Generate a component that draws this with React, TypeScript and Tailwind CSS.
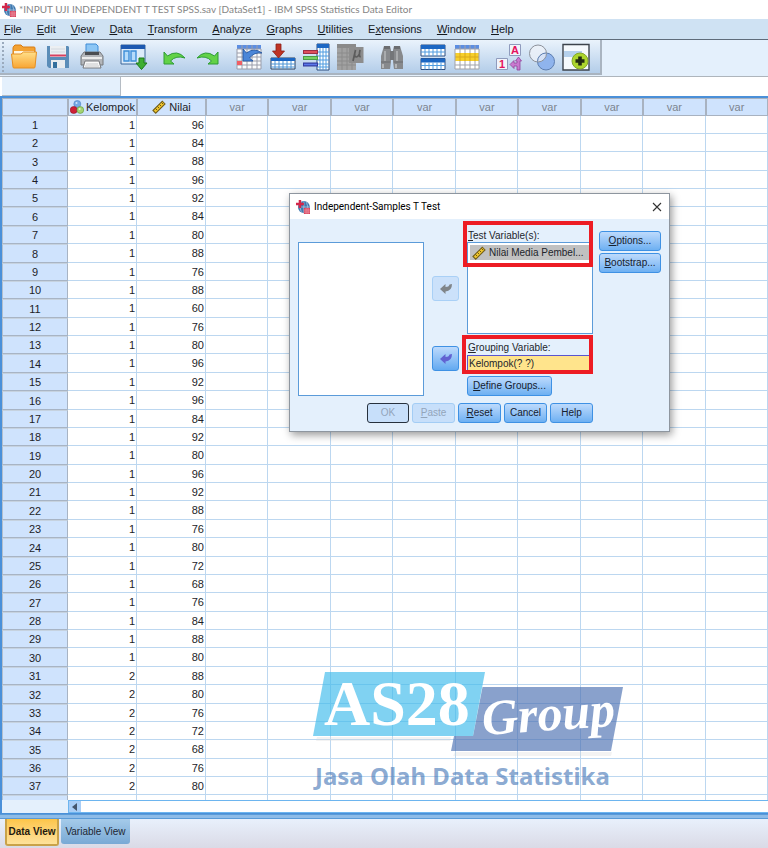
import type { ReactNode } from "react";

const values = [
  96, 84, 88, 96, 92, 84, 80, 88, 76, 88, 60, 76, 80, 96, 92, 96, 84, 92, 80, 96,
  92, 88, 76, 80, 72, 68, 76, 84, 88, 80, 88, 80, 76, 72, 68, 76, 80,
];

const emptyColumns = [0, 1, 2, 3, 4, 5, 6, 7, 8];

const menus = [
  ["", "F", "ile"],
  ["", "E", "dit"],
  ["", "V", "iew"],
  ["", "D", "ata"],
  ["", "T", "ransform"],
  ["", "A", "nalyze"],
  ["", "G", "raphs"],
  ["", "U", "tilities"],
  ["E", "x", "tensions"],
  ["", "W", "indow"],
  ["", "H", "elp"],
];

function Key({ children }: { children: ReactNode }) {
  return <span className="underline underline-offset-1">{children}</span>;
}

function AppIcon() {
  return (
    <svg viewBox="0 0 16 16" className="size-[14px] shrink-0" aria-hidden="true">
      <circle cx="9" cy="8" r="6.800" fill="#3f79b0" />
      <path d="M3 8h12M9 1.500v13M6 2.500q-3 5.500 0 11M12 2.500q3 5.500 0 11" stroke="#b9d3ea" strokeWidth=".8" fill="none" />
      <path d="M4.500 0v9M0 4.500h9" stroke="#d3274a" strokeWidth="2.800" />
      <rect x="9" y="9" width="7" height="7" fill="#d8405c" />
      <path d="M9 11.500h7M9 13.800h7M11.500 9v7M13.800 9v7" stroke="#f4c9d1" strokeWidth=".5" />
    </svg>
  );
}

function RulerIcon() {
  return (
    <svg viewBox="0 0 14 14" className="size-[14px] shrink-0" aria-hidden="true">
      <path d="M1 10.500 10.300 1.200 13 3.900 3.700 13.200Z" fill="#f0c62c" stroke="#74601c" strokeWidth="1.100" />
      <path d="m3.500 8.500 1.400 1.400M5.500 6.500l1.400 1.400M7.500 4.500l1.400 1.400M9.500 2.500l1.400 1.400" stroke="#5d4a10" strokeWidth="1" />
    </svg>
  );
}

function NominalIcon() {
  return (
    <svg viewBox="0 0 14 14" className="size-[14px] shrink-0" aria-hidden="true">
      <circle cx="7.300" cy="4" r="3.500" fill="#76a9e6" stroke="#4c7fc0" strokeWidth=".6" />
      <circle cx="3.700" cy="10" r="3.500" fill="#cf2037" stroke="#8e1324" strokeWidth=".6" />
      <circle cx="10.300" cy="10" r="3.400" fill="#a4d473" stroke="#5e9437" strokeWidth=".6" />
      <circle cx="6.500" cy="3" r="1" fill="#d3e6fb" />
      <circle cx="9.600" cy="9" r="1" fill="#e3f5cf" />
    </svg>
  );
}

const icons: Record<string, ReactNode> = {
  open: (
    <>
      <path d="M3 16V5q0-1 1-2l1-1h6l2 2h11q1 0 1 1v11Z" fill="#f3a233" stroke="#d97d12" />
      <path d="M4 8h20v5H4Z" fill="#fff6df" />
      <path d="M1.500 11H11l2.500-2h13L25 24q0 1-1 1H4q-1 0-1-1Z" fill="url(#folder)" stroke="#e58f22" />
    </>
  ),
  save: (
    <>
      <path d="M3 3h21l1 1v21H5l-2-2Z" fill="#5b8db8" />
      <path d="M6 3h16v11H6Z" fill="#eceff2" />
      <path d="M6 12.500h16" stroke="#d8405f" strokeWidth="2" />
      <path d="M7 6h14M7 9h14" stroke="#d2d8df" />
      <path d="M7 17h14v8H7Z" fill="#e8ecef" />
      <path d="M9 19h4v6H9Z" fill="#336f9d" />
    </>
  ),
  print: (
    <>
      <path d="M8 1h10l2 2v9H8Z" fill="#8cc6f5" stroke="#3f8bd6" />
      <path d="M6 9h16l3 4v9H3v-9Z" fill="#b3b6ba" stroke="#75787c" />
      <path d="M7 9h14v3H7Z" fill="#4a4d51" />
      <path d="M4 15h20" stroke="#eceded" strokeWidth="2" />
      <path d="M7 18h14l2 7H5Z" fill="#f9f9f9" stroke="#77797d" />
      <path d="M8 21h12M7 23h14" stroke="#c5c7c9" />
    </>
  ),
  recall: (
    <>
      <path d="M2 2h24v19H2Z" fill="#dcebfa" stroke="#3c6698" />
      <path d="M2 2h24v4H2Z" fill="#1d59b0" />
      <path d="M5 8h5v10H5ZM12 8h5v10h-5Z" fill="#b5dbfa" stroke="#3d8ed8" strokeWidth="1.400" />
      <path d="M20 15h5v5h3l-5.500 6.500L17 20h3Z" fill="#3fae32" stroke="#1c7a1b" />
    </>
  ),
  undo: <path d="M4 9v12h10l-3.500-3q5.500-6 14.500-3Q17 6 7.500 13Z" fill="#62d247" stroke="#2e9c35" />,
  redo: <path d="M24 9v12H14l3.500-3Q12 12 3 15q8-9 17.500-2Z" fill="#62d247" stroke="#2e9c35" />,
  gotoCase: (
    <>
      <path d="M2 2h24v24H2Z" fill="#fafbfd" />
      <path d="M2 2h24v4H2Z" fill="#5c8ee2" />
      <path d="M2 6h24M2 10h24M2 14h24M2 18h24M2 22h24M2 26h24M2 6v20M7 2v24M12 2v24M17 2v24M22 2v24M26 6v20" stroke="#9a9daa" />
      <path d="M2 18h5v4H2Z" fill="#f05d64" />
      <path d="M8 6v12h10l-3.500-3Q19 9 27 10q-8-6-15.500 0Z" fill="#4b86d8" stroke="#1c4f9c" strokeWidth=".8" />
    </>
  ),
  gotoVariable: (
    <>
      <path d="M2 15h24v11H2Z" fill="#fff" stroke="#273e5e" />
      <path d="M2 15h24v3H2Z" fill="#1c67c3" />
      <path d="M2 21h24M2 24h24M6 18v8M10 18v8M14 18v8M18 18v8M22 18v8" stroke="#4c93d4" />
      <path d="M7 1h5v7h3.500l-6 7-6-7H7Z" fill="#bf3324" stroke="#8c2017" strokeWidth=".8" />
    </>
  ),
  variables: (
    <>
      <path d="M14 1h12v26H14Z" fill="#fff" stroke="#2a4b7c" />
      <path d="M14 1h12v4H14Z" fill="#1c67c3" />
      <path d="M14 9h12M14 13h12M14 17h12M14 21h12M14 24h12M17 5v22M20 5v22M23 5v22" stroke="#4f9be0" />
      <path d="M0 9h15" stroke="#9d2f45" strokeWidth="4" />
      <path d="M1 9h13" stroke="#ef5a63" strokeWidth="1.600" />
      <path d="M0 15h15" stroke="#4a9e45" strokeWidth="4" />
      <path d="M1 15h13" stroke="#84df6d" strokeWidth="1.600" />
      <path d="M0 21.500h15" stroke="#343c9e" strokeWidth="4" />
      <path d="M1 21.500h13" stroke="#5c78ec" strokeWidth="1.600" />
    </>
  ),
  descriptives: (
    <>
      <path d="M0 1h19v26H0Z" fill="#a1a1a1" />
      <path d="M0 1h19v4H0Z" fill="#8a8a8a" />
      <path d="M0 10h19M0 14h19M0 18h19M0 22h19M5 5v22M10 5v22M15 5v22" stroke="#8b8b8b" />
      <path d="M12 4h14.500v16H12Z" fill="#8d8d8d" />
      <path d="M16 18 18.500 7q-2 7 .8 7t3.700-7q-1.500 7 .8 6.500" stroke="#5c5c5c" strokeWidth="1.700" fill="none" />
    </>
  ),
  find: (
    <>
      <path d="M6 3h6l1 4v12l-1 7H3V13Z" fill="#87898c" />
      <path d="M16 3h6l3 10v13h-9l-1-7V7Z" fill="#87898c" />
      <path d="M12 8h4v9h-4Z" fill="#747679" />
      <path d="M6 3h6v3H6ZM16 3h6v3h-6Z" fill="#6b6d70" />
      <path d="M7 8v10M19 8v10" stroke="#a9abad" strokeWidth="2" />
      <path d="M3 19h9M16 19h9" stroke="#6b6d70" />
      <path d="M5 21v4M18 21v4" stroke="#b4b6b8" strokeWidth="2" />
    </>
  ),
  split: (
    <>
      <path d="M2 2h24v11H2ZM2 15.500h24v11H2Z" fill="#fff" stroke="#2c4e80" />
      <path d="M2 2h24v4H2ZM2 15.500h24v4H2Z" fill="#1c67c3" />
      <path d="M2 9h24M2 22.500h24M6 6v7M10 6v7M14 6v7M18 6v7M22 6v7M6 19.500v7M10 19.500v7M14 19.500v7M18 19.500v7M22 19.500v7" stroke="#4f9be0" />
    </>
  ),
  select: (
    <>
      <path d="M2 2h24v24H2Z" fill="#fff" />
      <path d="M2 2h24v4H2Z" fill="#5c8ee2" />
      <path d="M2 10h24v8H2Z" fill="#f7cf2b" />
      <path d="M7 10v8M12 10v8M17 10v8M22 10v8M2 14h24" stroke="#d9a91c" />
      <path d="M2 6h24M2 22h24M2 26h24M2 6v20M26 6v20M7 2v8M12 2v8M17 2v8M22 2v8M7 18v8M12 18v8M17 18v8M22 18v8" stroke="#a1a3ab" />
    </>
  ),
  labels: (
    <>
      <path d="M15.500 1.500h11v11h-11ZM2.500 15.500h11v11h-11Z" fill="#f2f4fb" stroke="#8f9bbd" />
      <text x="21" y="11" textAnchor="middle" fontSize="11" fontWeight="700" fontFamily="Liberation Sans, sans-serif" fill="#e5125d">A</text>
      <text x="8" y="25" textAnchor="middle" fontSize="11" fontWeight="700" fontFamily="Liberation Sans, sans-serif" fill="#e5125d">1</text>
      <path d="m24.500 14 3 4h-1.500v9h-3v-4h-3v2.500l-4-4 4-4v2.500h3v-2h-1.500Z" fill="#c978cf" stroke="#93429b" strokeWidth=".8" />
    </>
  ),
  sets: (
    <>
      <circle cx="18" cy="18.500" r="8.500" fill="#8fb4ed" stroke="#5d7eb0" />
      <circle cx="10" cy="10.500" r="8.500" fill="#eef2f8" fillOpacity=".75" stroke="#8d929b" />
      <path d="M18 10A8.500 8.500 0 0 0 9.500 18.500" stroke="#5d7eb0" fill="none" />
    </>
  ),
  custom: (
    <>
      <path d="M1 1.500h26v25.500H1Z" fill="#f5f9fd" stroke="#3c434c" strokeWidth="1.400" />
      <path d="M2 8h18v6H2Z" fill="#b5d0ec" />
      <circle cx="18" cy="18" r="8" fill="#acd52d" stroke="#84a72a" />
      <path d="M18 13.500v9M13.500 18h9" stroke="#222b12" strokeWidth="3.600" />
    </>
  ),
};

const toolGroups = [
  [["open", "Open data"], ["save", "Save"], ["print", "Print"]],
  [["recall", "Recall dialogs"]],
  [["undo", "Undo"], ["redo", "Redo"]],
  [["gotoCase", "Go to case"], ["gotoVariable", "Go to variable"], ["variables", "Variables"], ["descriptives", "Descriptives"]],
  [["find", "Find"]],
  [["split", "Split file"], ["select", "Select cases"]],
  [["labels", "Value labels"], ["sets", "Variable sets"], ["custom", "Customize toolbar"]],
];

function Toolbar() {
  return (
    <div className="flex h-[37px] items-start border-b border-[#aeb5bc] bg-[#e4f0fc]">
      <div className="flex h-[35px] items-center gap-[13px] border-r-2 border-b-2 border-[#a9b4c0] bg-linear-to-b from-[#eaf3fc] to-[#b3cde9] pr-[10px] pl-[2px]">
        <span className="-mr-[7px] h-[30px] border-l-2 border-dotted border-[#9aaabd]" />
        {toolGroups.map((group) => (
          <div key={group[0][0]} className="flex gap-[6px]">
            {group.map(([id, label]) => (
              <button key={id} type="button" aria-label={label} className="size-[28px]">
                <svg viewBox="0 0 28 28" className="size-[28px] overflow-visible" fill="none" aria-hidden="true">
                  <defs>
                    <linearGradient id="folder" x1="0" y1="0" x2="0" y2="1">
                      <stop offset="0" stopColor="#ffe08a" />
                      <stop offset="1" stopColor="#f8a533" />
                    </linearGradient>
                  </defs>
                  {icons[id]}
                </svg>
              </button>
            ))}
          </div>
        ))}
      </div>
    </div>
  );
}

function DataGrid() {
  const head = "h-[18px] border border-[#a8b2c0] bg-[#cfe3fd] p-0 font-normal";
  const cell = "border-r border-b border-[#bcd7f0] p-0 pr-px text-right";
  return (
    <div className="h-[704px] overflow-hidden border-t-2 border-l-2 border-[#4a90d9] bg-white">
      <table className="w-full table-fixed border-separate border-spacing-0 text-[11px] leading-[16px] text-[#1d1d28]">
        <colgroup>
          <col className="w-[66px]" />
          <col className="w-[69px]" />
          <col className="w-[69px]" />
          {emptyColumns.map((c) => <col key={c} />)}
        </colgroup>
        <thead>
          <tr>
            <th className={head} aria-label="Case" />
            <th scope="col" className={head}>
              <span className="flex items-center gap-[2px] overflow-hidden pl-px"><NominalIcon />Kelompok</span>
            </th>
            <th scope="col" className={head}>
              <span className="flex items-center justify-center gap-[3px]"><RulerIcon />Nilai</span>
            </th>
            {emptyColumns.map((c) => (
              <th key={c} scope="col" className="h-[18px] border border-[#a8b2c0] bg-[#cfe3fd] p-0 font-normal text-[#7d858f]">var</th>
            ))}
          </tr>
        </thead>
        <tbody>
          {[...values, null].map((value, i) => (
            <tr key={i} className="h-[18px] nth-[8n]:h-[19px] nth-[8n+3]:h-[19px] nth-[8n+6]:h-[19px]">
              <th scope="row" className="border border-t-[#c6d2df] border-r-[#a8b4c4] border-b-[#a8b4c4] border-l-[#b3bfcd] bg-[#cfe3fd] p-0 font-normal">
                {value === null ? "" : i + 1}
              </th>
              <td className={cell}>{value === null ? "" : i < 30 ? 1 : 2}</td>
              <td className={cell}>{value}</td>
              {emptyColumns.map((c) => <td key={c} className={cell} />)}
            </tr>
          ))}
        </tbody>
      </table>
    </div>
  );
}

function ActionButton({ children, className = "", disabled = false }: { children: ReactNode; className?: string; disabled?: boolean }) {
  const tone = disabled
    ? "border-[#a3cdf5] bg-[#c7dffa] text-[#93a5ba]"
    : "border-[#3e91e4] bg-linear-to-b from-[#bddafc] to-[#6db0f2] text-[#15202e]";
  return (
    <button type="button" disabled={disabled} className={`h-[20px] rounded-[3px] border text-center whitespace-nowrap ${tone} ${className}`}>
      {children}
    </button>
  );
}

function MoveButton({ label, disabled = false }: { label: string; disabled?: boolean }) {
  const tone = disabled
    ? "border-[#a9d0f6] bg-[#cbe1fa] text-[#808589]"
    : "border-[#3e91e4] bg-linear-to-b from-[#bddafc] to-[#62a9f0] text-[#6263d2]";
  return (
    <button type="button" aria-label={label} disabled={disabled} className={`grid h-[25px] w-[27px] place-items-center rounded-[3px] border ${tone}`}>
      <svg viewBox="0 0 14 12" className="h-[12px] w-[14px]" fill="currentColor" aria-hidden="true">
        <path d="M1 6 6.500 1v3q3.500 0 4-2.500L13 1q0 7-6.500 7.500V11Z" />
      </svg>
    </button>
  );
}

function Dialog() {
  return (
    <section
      role="dialog"
      aria-labelledby="dialog-title"
      className="absolute top-[193px] left-[289px] w-[381px] border border-[#8e969f] bg-[#e4f0fc] text-[10px] leading-[12px] text-[#22252b] shadow-[2px_3px_8px_rgba(0,0,0,0.4)]"
    >
      <header className="flex h-[25px] items-center gap-[4px] bg-white pr-[7px] pl-[6px]">
        <AppIcon />
        <h2 id="dialog-title" className="font-[Roboto,'Noto_Sans',sans-serif] text-[10px] text-black">Independent-Samples T Test</h2>
        <button type="button" aria-label="Close" className="ml-auto">
          <svg viewBox="0 0 10 10" className="size-[10px]" stroke="#333" strokeWidth="1.100" aria-hidden="true">
            <path d="m1 1 8 8M9 1 1 9" />
          </svg>
        </button>
      </header>
      <div className="flex items-start pt-[3px] pr-[8px] pl-[8px]">
        <ul role="listbox" aria-label="Available variables" className="mt-[20px] h-[154px] w-[126px] border border-[#5b9bd9] bg-white" />
        <div className="mt-[54px] ml-[8px] flex flex-col gap-[45px]">
          <MoveButton label="Move to test variables" disabled />
          <MoveButton label="Remove grouping variable" />
        </div>
        <div className="ml-[8px] flex w-[126px] flex-col">
          <div className="relative pt-[8px]">
            <span id="test-label" className="block h-[12px] pl-px"><Key>T</Key>est Variable(s):</span>
            <ul role="listbox" aria-labelledby="test-label" className="h-[92px] border border-[#5b9bd9] bg-white p-[2px]">
              <li role="option" aria-selected="true" className="flex h-[15px] items-center gap-[3px] bg-[#c1c1c1] pl-[2px] whitespace-nowrap">
                <RulerIcon />Nilai Media Pembel...
              </li>
            </ul>
            <span className="pointer-events-none absolute -top-px right-0 -left-[4px] h-[46px] border-4 border-[#ed1c24]" />
          </div>
          <div className="relative mt-[2px] pt-[6px]">
            <label htmlFor="grouping" className="block h-[13px] pl-px"><Key>G</Key>rouping Variable:</label>
            <input
              id="grouping"
              readOnly
              defaultValue="Kelompok(? ?)"
              className="block h-[17px] w-full border border-[#5a55cf] bg-[#ffe48c] px-px"
            />
            <span className="pointer-events-none absolute -top-px right-0 -left-[5px] h-[39px] border-4 border-[#ed1c24]" />
          </div>
          <ActionButton className="mt-[4px] w-[85px]"><Key>D</Key>efine Groups...</ActionButton>
        </div>
        <div className="mt-[9px] ml-[6px] flex w-[62px] flex-col gap-[2px]">
          <ActionButton><Key>O</Key>ptions...</ActionButton>
          <ActionButton><Key>B</Key>ootstrap...</ActionButton>
        </div>
      </div>
      <footer className="flex gap-[3px] pt-[7px] pb-[8px] pl-[77px]">
        <button type="button" disabled className="h-[20px] w-[42px] rounded-[3px] border border-[#27313d] bg-[#c7dffa] text-[#93a5ba]">OK</button>
        <ActionButton className="w-[43px]" disabled><Key>P</Key>aste</ActionButton>
        <ActionButton className="w-[43px]"><Key>R</Key>eset</ActionButton>
        <ActionButton className="w-[43px]">Cancel</ActionButton>
        <ActionButton className="w-[43px]">Help</ActionButton>
      </footer>
    </section>
  );
}

function Watermark() {
  return (
    <div className="pointer-events-none absolute top-[672px] left-[313px] w-[312px]">
      <svg viewBox="0 0 312 88" className="block h-[88px] w-[312px] overflow-visible" aria-label="AS28 Group" role="img">
        <path d="M4 65h134l-1 4H3ZM142 80h157l-1 4H140Z" fill="#d8d8d8" fillOpacity=".3" />
        <path d="M169.500 15H310l-12 64H138l3-15h19Z" fill="#4a6fb0" fillOpacity=".65" />
        <path d="M12 0h160l-12 64H0Z" fill="#44bdec" fillOpacity=".68" />
        <text x="11" y="53" fontFamily="Liberation Serif, serif" fontWeight="700" fontSize="64" fill="#fff">AS28</text>
        <text x="170" y="63" fontFamily="Liberation Serif, serif" fontStyle="italic" fontWeight="700" fontSize="50" fill="#fff" transform="rotate(-4 170 63)">Group</text>
      </svg>
      <p className="pl-[2px] font-['Noto_Sans','Open_Sans',sans-serif] text-[24px] leading-[32px] font-bold whitespace-nowrap text-[#4a7ab8]/65">Jasa Olah Data Statistika</p>
    </div>
  );
}

export default function App() {
  return (
    <main className="relative w-full overflow-hidden bg-white font-['Liberation_Sans',Arial,sans-serif]">
      <header className="flex h-[19px] items-center gap-[3px] pl-[2px]">
        <AppIcon />
        <h1 className="font-[Lato,'Noto_Sans',sans-serif] text-[10px] whitespace-nowrap text-[#858585]">
          *INPUT UJI INDEPENDENT T TEST SPSS.sav [DataSet1] - IBM SPSS Statistics Data Editor
        </h1>
      </header>
      <nav className="flex h-[21px] items-center gap-[15px] border-b border-[#5f6c7a] bg-[#cfe2f3] pl-[4px] text-[11px] text-[#15181d]">
        {menus.map(([before, key, after]) => (
          <button key={key} type="button">{before}<Key>{key}</Key>{after}</button>
        ))}
      </nav>
      <Toolbar />
      <div className="flex h-[19px] bg-white pl-[2px]">
        <output aria-label="Active cell" className="block w-[119px] border-r border-b border-[#b5bcc4] bg-[#e4f0fc]" />
        <input aria-label="Cell value" className="ml-px min-w-0 flex-1 bg-white" />
      </div>
      <DataGrid />
      <div className="flex h-[14px] border-b border-l-2 border-[#4a90d9] bg-[#e4f0fc] pl-[66px]">
        <div className="flex flex-1 border border-r-0 border-[#6db5ef] bg-white">
          <button type="button" aria-label="Scroll left" className="grid w-[12px] place-items-center bg-[#a9cef6]">
            <svg viewBox="0 0 6 8" className="h-[8px] w-[6px]" aria-hidden="true"><path d="M5 0v8L0 4Z" fill="#44566c" /></svg>
          </button>
        </div>
      </div>
      <div className="h-[5px] border-y border-[#5a9bd8] bg-[#8ebce8]" />
      <div role="tablist" className="flex h-[29px] items-start gap-[2px] bg-linear-to-b from-[#e8f0fc] to-[#dadae6] pl-[5px] text-[10px]">
        <button type="button" role="tab" aria-selected="true" className="h-[27px] w-[54px] rounded-b-[3px] border-2 border-t-0 border-[#c9a24a] bg-linear-to-b from-[#fdc548] to-[#fee29a] font-bold whitespace-nowrap text-[#1f1a10]">
          Data View
        </button>
        <button type="button" role="tab" aria-selected="false" className="h-[25px] w-[69px] rounded-b-[3px] bg-linear-to-b from-[#a5cbea] to-[#79a9d5] whitespace-nowrap text-[#1c2733]">
          Variable View
        </button>
      </div>
      <Dialog />
      <Watermark />
    </main>
  );
}
